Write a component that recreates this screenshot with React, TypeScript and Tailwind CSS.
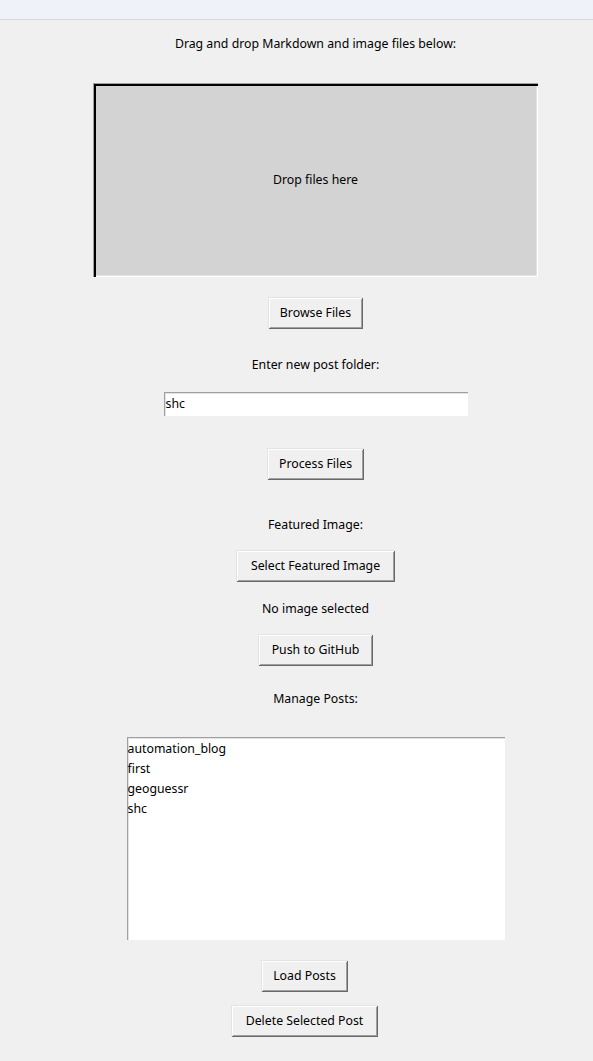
import React from "react";

const btn =
  "h-[32px] px-[12px] bg-[#f0f0f0] text-black text-[12.3px] leading-none shadow-[inset_1px_1px_0_#e3e3e3,inset_-1px_-1px_0_#696969,inset_2px_2px_0_#ffffff,inset_-2px_-2px_0_#a0a0a0] flex items-center justify-center";

function TkButton({ label, className = "" }: { label: string; className?: string }) {
  return <button className={`${btn} ${className}`}>{label}</button>;
}

function Label({ text, className = "" }: { text: string; className?: string }) {
  return <div className={`h-[16px] leading-[16px] text-[12.3px] text-black ${className}`}>{text}</div>;
}

export default function App() {
  const posts = ["automation_blog", "first", "geoguessr", "shc"];
  return (
    <div
      className="w-[593px] h-[1061px] bg-[#f0f0f0] flex flex-col overflow-hidden"
      style={{ fontFamily: '"Noto Sans", "Open Sans", sans-serif' }}
    >
      <div className="w-full h-[20px] shrink-0 bg-[#eff2f9] border-b border-[#d6d6d6]" />
      <div className="w-[631px] shrink-0 flex flex-col items-center">
        <Label text="Drag and drop Markdown and image files below:" className="mt-[16px]" />
        <div className="mt-[31px] w-[445px] h-[194px] bg-[#d3d3d3] shadow-[inset_1px_1px_0_#a0a0a0,inset_3px_3px_0_#000000,inset_-1px_-1px_0_#ffffff,inset_-2px_-2px_0_#e3e3e3] flex items-center justify-center text-[12.3px] text-black">
          Drop files here
        </div>
        <TkButton label="Browse Files" className="mt-[20px]" />
        <Label text="Enter new post folder:" className="mt-[28px]" />
        <div className="mt-[19px] w-[304px] h-[24px] bg-white shadow-[inset_1px_1px_0_#a0a0a0,inset_2px_2px_0_#e3e3e3] flex items-center pl-[2px] text-[12.3px] text-black">
          shc
        </div>
        <TkButton label="Process Files" className="mt-[32px]" />
        <Label text="Featured Image:" className="mt-[37px]" />
        <TkButton label="Select Featured Image" className="mt-[17px] px-[15px]" />
        <Label text="No image selected" className="mt-[19px]" />
        <TkButton label="Push to GitHub" className="mt-[17px] px-[14px]" />
        <Label text="Manage Posts:" className="mt-[25px]" />
        <div className="mt-[30px] w-[378px] h-[203px] bg-white shadow-[inset_1px_1px_0_#a0a0a0,inset_2px_2px_0_#e3e3e3] pt-[2px] pl-[1px] text-[12.3px] text-black">
          {posts.map((p) => (
            <div key={p} className="h-[20px] leading-[20px]">
              {p}
            </div>
          ))}
        </div>
        <TkButton label="Load Posts" className="mt-[20px] px-[11px] ml-[-22px]" />
        <TkButton label="Delete Selected Post" className="mt-[13px] px-[15px] ml-[-22px]" />
      </div>
    </div>
  );
}
